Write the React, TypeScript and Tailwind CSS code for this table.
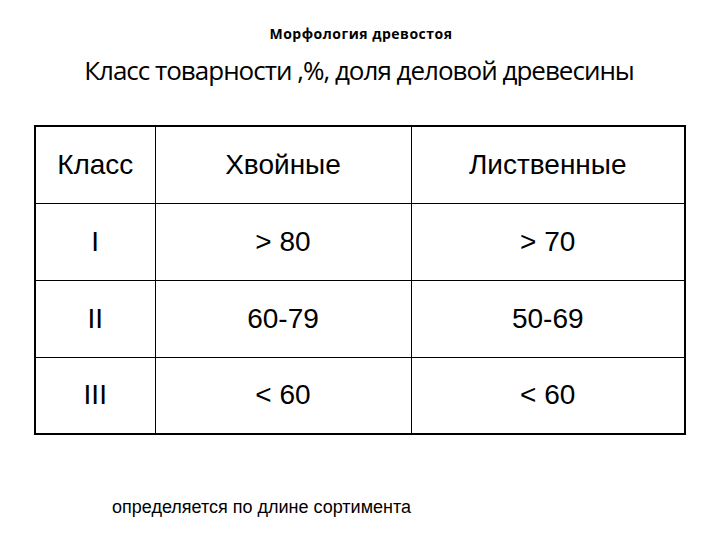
import React from "react";

const rows = [
  ["I", "> 80", "> 70"],
  ["II", "60-79", "50-69"],
  ["III", "< 60", "< 60"],
];

export default function App() {
  return (
    <div className="w-[720px] h-[540px] bg-white text-black flex flex-col items-center">
      <div className="mt-[24px] ml-[2px] h-[20px] text-[14px] font-bold leading-[20px] font-['Open_Sans',sans-serif] tracking-[0.5px]">
        Морфология древостоя
      </div>
      <div className="mt-[8px] h-[36px] ml-[-2px] text-[26px] leading-[36px] font-['Open_Sans',sans-serif] tracking-[-1px]">
        Класс товарности ,%, доля деловой древесины
      </div>
      <table className="mt-[37px] w-[650px] border-collapse border-2 border-black font-['Liberation_Sans',Arial,sans-serif] text-[28px] table-fixed">
        <colgroup>
          <col className="w-[120px]" />
          <col className="w-[256px]" />
          <col className="w-[274px]" />
        </colgroup>
        <tbody>
          <tr className="h-[77px]">
            <td className="border border-black text-center">Класс</td>
            <td className="border border-black text-center">Хвойные</td>
            <td className="border border-black text-center">Лиственные</td>
          </tr>
          {rows.map((r) => (
            <tr key={r[0]} className="h-[77px]">
              {r.map((c, i) => (
                <td key={i} className="border border-black text-center">
                  {c}
                </td>
              ))}
            </tr>
          ))}
        </tbody>
      </table>
      <div className="self-start ml-[112px] mt-[62px] text-[18px] leading-[20px] font-['Liberation_Sans',Arial,sans-serif]">
        определяется по длине сортимента
      </div>
    </div>
  );
}
